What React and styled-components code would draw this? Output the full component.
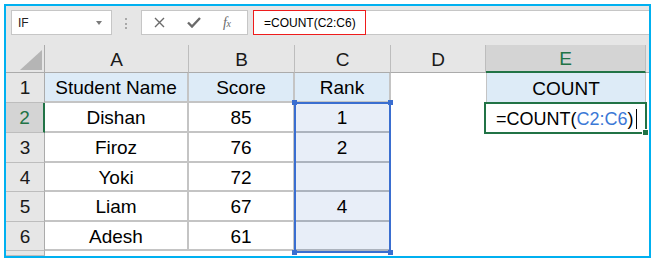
import React from 'react';
import styled, { createGlobalStyle, css } from 'styled-components';

const Global = createGlobalStyle`
  html, body { margin: 0; padding: 0; background: #ffffff; }
  body { font-family: "Liberation Sans", Arial, sans-serif; }
`;

const GREEN = '#217346';
const BLUE = '#3a6ed0';
const HEAD_BG = '#e6e6e6';
const HEAD_SEL = '#d4d4d4';
const HEAD_LINE = '#bdbdbd';
const CELL_LINE = '#c4c4c4';

const place = css`
  grid-row: ${p => p.$r};
  grid-column: ${p => p.$c};
`;

const Frame = styled.div`
  box-sizing: border-box;
  margin: 4px 0 0 4px;
  width: 647px;
  height: 254px;
  border: 2px solid #00b0f0;
  background: ${HEAD_BG};
  display: flex;
  flex-direction: column;
  overflow: hidden;
`;

const FormulaBar = styled.div`
  box-sizing: border-box;
  height: 39px;
  flex: none;
  display: flex;
  align-items: flex-start;
  padding: 4px 0 0 5px;
  font-size: 12px;
  color: #222;
`;

const NameBox = styled.div`
  box-sizing: border-box;
  width: 101px;
  height: 25px;
  background: #fff;
  border: 1px solid #c6c6c6;
  display: flex;
  align-items: center;
  justify-content: space-between;
  padding: 0 9px 0 6px;
`;

const DropArrow = styled.span`
  width: 0;
  height: 0;
  border-left: 3.5px solid transparent;
  border-right: 3.5px solid transparent;
  border-top: 4px solid #7a7a7a;
`;

const Grip = styled.div`
  margin: 8px 0 0 13px;
  display: flex;
  flex-direction: column;
  gap: 2.5px;
`;

const GripDot = styled.span`
  width: 2px;
  height: 2px;
  background: #a8a8a8;
`;

const ButtonBox = styled.div`
  box-sizing: border-box;
  margin-left: 14px;
  width: 107px;
  height: 25px;
  background: #fff;
  border: 1px solid #c6c6c6;
  display: flex;
  align-items: center;
  padding-left: 12px;
  gap: 22px;
  color: #6a6a6a;
`;

const Fx = styled.span`
  font-family: "Liberation Serif", "Times New Roman", serif;
  font-style: italic;
  font-size: 14px;
  color: #6a6a6a;
  letter-spacing: -0.5px;
  & small { font-size: 10px; }
`;

const FormulaInput = styled.div`
  box-sizing: border-box;
  margin-left: 5px;
  flex: 1;
  height: 25px;
  background: #fff;
  border-top: 1px solid #c6c6c6;
  border-bottom: 1px solid #c6c6c6;
  display: flex;
`;

const FormulaText = styled.div`
  box-sizing: border-box;
  height: 25px;
  margin-top: -1px;
  width: 113px;
  border: 1px solid #ee1c1c;
  display: flex;
  align-items: center;
  padding-left: 10px;
  color: #000;
`;

const Sheet = styled.div`
  display: grid;
  grid-template-columns: 39px 144px 106px 96px 95px 160px 3px;
  grid-template-rows: 28px 30px 30px 30px 29px 30px 29px 5px;
  background: #fff;
  font-size: 19px;
`;

const HeadBase = css`
  box-sizing: border-box;
  display: flex;
  align-items: center;
  justify-content: center;
  color: ${p => (p.$sel ? GREEN : '#1a1a1a')};
  background: ${p => (p.$sel ? HEAD_SEL : HEAD_BG)};
`;

const Corner = styled.div`
  ${place};
  box-sizing: border-box;
  background: ${HEAD_BG};
  border-right: 1px solid #ababab;
  border-bottom: 1px solid #ababab;
  display: flex;
  align-items: flex-end;
  justify-content: flex-end;
  padding: 0 2px 2px 0;
`;

const CornerTri = styled.span`
  width: 0;
  height: 0;
  border-left: 22px solid transparent;
  border-bottom: 20px solid #b5b5b5;
`;

const ColHead = styled.div`
  ${place};
  ${HeadBase};
  padding-top: 2px;
  border-right: ${p => (p.$last ? 'none' : `1px solid ${HEAD_LINE}`)};
  border-bottom: ${p => (p.$sel ? `2px solid ${GREEN}` : '1px solid #ababab')};
`;

const RowHead = styled.div`
  ${place};
  ${HeadBase};
  padding-top: 1px;
  border-right: ${p => (p.$sel ? `2px solid ${GREEN}` : '1px solid #ababab')};
  border-bottom: 1px solid ${HEAD_LINE};
`;

const Cell = styled.div`
  ${place};
  box-sizing: border-box;
  display: flex;
  align-items: center;
  white-space: nowrap;
  justify-content: ${p => (p.$left ? 'flex-start' : 'center')};
  padding: 2px 0 0 ${p => (p.$left ? '10px' : '0')};
  font-size: ${p => (p.$left ? '18px' : 'inherit')};
  color: #000;
  background: ${p => (p.$fill === 'head' ? '#ddebf7' : p.$fill === 'range' ? '#e8eef8' : '#ffffff')};
  ${p =>
    p.$lined &&
    css`
      border-right: 2px solid ${CELL_LINE};
      border-bottom: 2px solid ${p.$fill === 'range' ? '#acb3be' : CELL_LINE};
    `}
  ${p =>
    p.$boxed &&
    css`
      border-left: 1px solid ${CELL_LINE};
      border-right: 1px solid ${CELL_LINE};
    `}
`;

const Ref = styled.span`
  color: #3b78d6;
`;

const Caret = styled.span`
  display: inline-block;
  width: 0;
  height: 20px;
  border-left: 1.5px solid #000;
  margin-left: 2px;
`;

const Outline = styled.div`
  ${place};
  position: relative;
  z-index: 2;
  margin: ${p => p.$margin};
  border: 2px solid ${p => p.$color};
  pointer-events: none;
`;

const Handle = styled.span`
  position: absolute;
  width: 5px;
  height: 5px;
  background: ${p => p.$color};
  ${p => p.$top && 'top: -4px;'}
  ${p => p.$bottom && 'bottom: -4px;'}
  ${p => p.$l && 'left: -4px;'}
  ${p => p.$r2 && 'right: -4px;'}
  border: ${p => (p.$ring ? '1px solid #fff' : 'none')};
`;

const columns = ['A', 'B', 'C', 'D', 'E'];

const rows = [
  ['Student Name', 'Score', 'Rank'],
  ['Dishan', '85', '1'],
  ['Firoz', '76', '2'],
  ['Yoki', '72', ''],
  ['Liam', '67', '4'],
  ['Adesh', '61', ''],
];

const XIcon = () => (
  <svg width="11" height="11" viewBox="0 0 11 11">
    <path d="M1 1 L10 10 M10 1 L1 10" stroke="#6a6a6a" strokeWidth="1.4" fill="none" />
  </svg>
);

const CheckIcon = () => (
  <svg width="14" height="11" viewBox="0 0 14 11">
    <path d="M1 5.5 L5 9.5 L13 1" stroke="#6a6a6a" strokeWidth="2.4" fill="none" />
  </svg>
);

export default function App() {
  return (
    <>
      <Global />
      <Frame>
        <FormulaBar>
          <NameBox>
            <span>IF</span>
            <DropArrow />
          </NameBox>
          <Grip>
            <GripDot />
            <GripDot />
            <GripDot />
          </Grip>
          <ButtonBox>
            <XIcon />
            <CheckIcon />
            <Fx>
              f<small>x</small>
            </Fx>
          </ButtonBox>
          <FormulaInput>
            <FormulaText>=COUNT(C2:C6)</FormulaText>
          </FormulaInput>
        </FormulaBar>
        <Sheet>
          <Corner $r={1} $c={1}>
            <CornerTri />
          </Corner>
          {columns.map((c, i) => (
            <ColHead key={c} $r={1} $c={i + 2} $sel={c === 'E'}>
              {c}
            </ColHead>
          ))}
          <ColHead $r={1} $c={7} $last />

          {rows.map((r, i) => {
            const n = i + 1;
            const gr = n + 1;
            const fill = n === 1 ? 'head' : null;
            return (
              <React.Fragment key={n}>
                <RowHead $r={gr} $c={1} $sel={n === 2}>{n}</RowHead>
                <Cell $r={gr} $c={2} $lined $fill={fill}>{r[0]}</Cell>
                <Cell $r={gr} $c={3} $lined $fill={fill}>{r[1]}</Cell>
                <Cell $r={gr} $c={4} $lined $fill={n === 1 ? 'head' : 'range'}>{r[2]}</Cell>
                <Cell $r={gr} $c={5} />
                {n === 1 ? (
                  <Cell $r={gr} $c={6} $fill="head" $boxed>
                    COUNT
                  </Cell>
                ) : n === 2 ? (
                  <Cell $r={gr} $c={6} $left>
                    =COUNT(<Ref>C2:C6</Ref>)
                    <Caret />
                  </Cell>
                ) : (
                  <Cell $r={gr} $c={6} />
                )}
                <Cell $r={gr} $c={7} />
              </React.Fragment>
            );
          })}
          <RowHead $r={8} $c={1} />
          <Cell $r={8} $c="2 / 8" />

          <Outline $r="3 / 8" $c={4} $margin="-1px 0 -2px -1px" $color={BLUE}>
            <Handle $color={BLUE} $top $l />
            <Handle $color={BLUE} $top $r2 />
            <Handle $color={BLUE} $bottom $l />
            <Handle $color={BLUE} $bottom $r2 />
          </Outline>
          <Outline $r={3} $c={6} $margin="-1px -1px -1px -2px" $color={GREEN}>
            <Handle $color={GREEN} $bottom $r2 $ring />
          </Outline>
        </Sheet>
      </Frame>
    </>
  );
}
